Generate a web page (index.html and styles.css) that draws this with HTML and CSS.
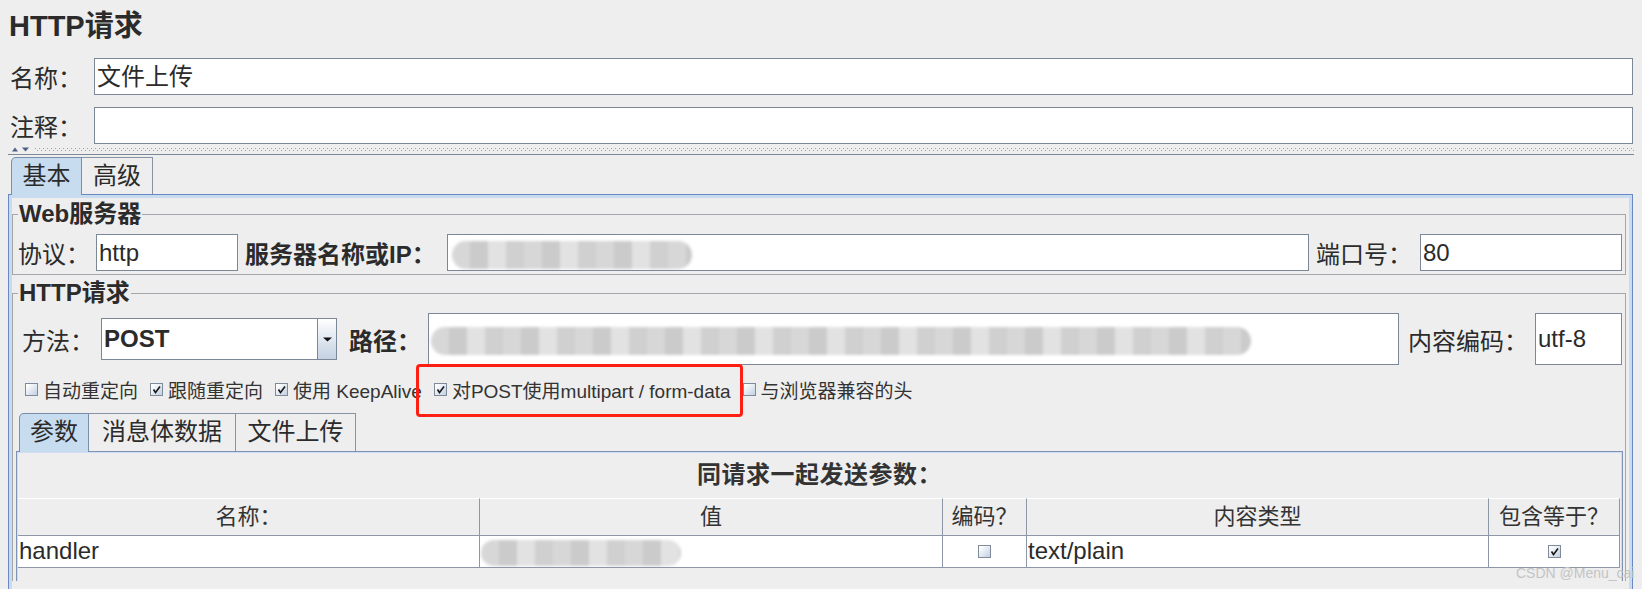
FILE: index.html
```html
<!DOCTYPE html>
<html lang="zh">
<head>
<meta charset="utf-8">
<title>HTTP请求</title>
<link rel="stylesheet" href="styles.css">
</head>
<body>
<div class="title">HTTP请求</div>
<div class="frow first"><span class="flabel">名称：</span><div class="field grow">文件上传</div></div>
<div class="frow second"><span class="flabel">注释：</span><div class="field grow"></div></div>
<div class="splitter">
  <svg class="arrows" width="20" height="5" viewBox="0 0 20 5"><polygon points="0,4.5 3,0.5 6,4.5" fill="#4d6185"/><polygon points="10,0.5 17,0.5 13.5,4.5" fill="#4d6185"/></svg>
  <div class="dots"></div>
</div>
<div class="tabs outer-tabs">
  <div class="tab sel w71">基本</div>
  <div class="tab w71">高级</div>
</div>
<div class="panel">
  <fieldset class="group">
    <legend>Web服务器</legend>
    <div class="row r-web">
      <span class="lbl w-proto">协议：</span>
      <div class="field f-proto">http</div>
      <span class="lbl bold w-server">服务器名称或IP：</span>
      <div class="field grow"><span class="blob blob-server"></span></div>
      <span class="lbl w-port">端口号：</span>
      <div class="field f-port">80</div>
    </div>
  </fieldset>
  <fieldset class="group g-http">
    <legend>HTTP请求</legend>
    <div class="row r-method">
      <span class="lbl w-method">方法：</span>
      <div class="combo">
        <div class="combo-text">POST</div>
        <div class="combo-btn"><svg width="9" height="5" viewBox="0 0 9 5"><polygon points="0,0.5 9,0.5 4.5,4.5" fill="#111"/></svg></div>
      </div>
      <span class="lbl bold w-path">路径：</span>
      <div class="field tall grow"><span class="blob blob-path"></span></div>
      <span class="lbl w-enc">内容编码：</span>
      <div class="field tall f-enc">utf-8</div>
    </div>
    <div class="row r-checks">
      <span class="cb"></span><span class="cbl">自动重定向</span>
      <span class="cb on"><svg width="11" height="11" viewBox="0 0 11 11"><path d="M2.5 5.5 L4.5 8.5 L9 2.5" stroke="#1a1a1a" stroke-width="1.6" fill="none"/></svg></span><span class="cbl">跟随重定向</span>
      <span class="cb on"><svg width="11" height="11" viewBox="0 0 11 11"><path d="M2.5 5.5 L4.5 8.5 L9 2.5" stroke="#1a1a1a" stroke-width="1.6" fill="none"/></svg></span><span class="cbl">使用 KeepAlive</span>
      <span class="cb on"><svg width="11" height="11" viewBox="0 0 11 11"><path d="M2.5 5.5 L4.5 8.5 L9 2.5" stroke="#1a1a1a" stroke-width="1.6" fill="none"/></svg></span><span class="cbl">对POST使用multipart / form-data</span>
      <span class="cb"></span><span class="cbl">与浏览器兼容的头</span>
    </div>
    <div class="tabs inner-tabs">
      <div class="tab sel w70">参数</div>
      <div class="tab w147">消息体数据</div>
      <div class="tab w120">文件上传</div>
    </div>
    <div class="inner-panel">
      <div class="tbl-title">同请求一起发送参数：</div>
      <div class="tbl">
        <div class="th">名称：</div>
        <div class="th">值</div>
        <div class="th">编码？</div>
        <div class="th">内容类型</div>
        <div class="th">包含等于？</div>
        <div class="td">handler</div>
        <div class="td"><span class="blob blob-value"></span></div>
        <div class="td center"><span class="cb"></span></div>
        <div class="td">text/plain</div>
        <div class="td center"><span class="cb on"><svg width="11" height="11" viewBox="0 0 11 11"><path d="M2.5 5.5 L4.5 8.5 L9 2.5" stroke="#1a1a1a" stroke-width="1.6" fill="none"/></svg></span></div>
      </div>
    </div>
  </fieldset>
</div>
<div class="redbox"></div>
<div class="watermark">CSDN @Menu_cai</div>
</body>
</html>
```
FILE: styles.css
```css
* { box-sizing: border-box; }
html, body { margin: 0; padding: 0; }
body {
  width: 1642px;
  height: 589px;
  overflow: hidden;
  position: relative;
  background: #eeeeee;
  color: #2b2b2b;
  font-family: "Liberation Sans", "Noto Sans CJK SC", sans-serif;
  font-size: 24px;
}
.title {
  font-size: 29px;
  font-weight: bold;
  line-height: 36px;
  padding: 8px 0 0 9px;
  height: 44px;
}
.frow {
  display: flex;
  align-items: center;
  height: 37px;
  margin: 0 9px 0 10px;
}
.frow.first { margin-top: 14px; }
.frow.second { margin-top: 12px; }
.flabel { width: 84px; flex: none; font-size: 24px; }
.field {
  height: 37px;
  background: #fff;
  border: 1px solid #7a8898;
  padding-left: 2px;
  font-size: 24px;
  line-height: 35px;
  white-space: nowrap;
  overflow: hidden;
  flex: none;
}
.field.grow, .grow { flex: 1; min-width: 0; }
.field.tall { height: 52px; line-height: 50px; }
.splitter {
  display: flex;
  align-items: center;
  height: 11px;
  margin: 0 8px;
  border-bottom: 1px solid #7a8898;
}
.arrows { margin-left: 4px; display: block; }
.dots {
  flex: 1;
  height: 3px;
  margin-left: 3px;
  background:
    linear-gradient(90deg, #9aa0a8 1px, transparent 1px) 0 0 / 4px 1px repeat-x,
    linear-gradient(90deg, #9aa0a8 1px, transparent 1px) 2px 2px / 4px 1px repeat-x;
}
.tabs { display: flex; align-items: flex-end; }
.outer-tabs { margin: 2px 0 0 11px; height: 37px; }
.tab {
  height: 37px;
  border: 1px solid #8794a3;
  border-bottom: none;
  border-top-left-radius: 5px;
  text-align: center;
  font-size: 24px;
  line-height: 35px;
  background: #eeeeee;
  flex: none;
}
.tab + .tab { border-left: none; border-top-left-radius: 0; }
.tab.sel {
  height: 38px;
  margin-bottom: -1px;
  background: #c8dcf0;
  position: relative;
  z-index: 2;
  border-color: #7b8da8;
}
.w70 { width: 70px; }
.w71 { width: 71px; }
.w147 { width: 147px; }
.w120 { width: 120px; }
.panel {
  margin: 0 9px 0 8px;
  border: 1px solid #6a88c2;
  border-bottom: none;
  padding: 3px 3px 0 3px;
  box-shadow: inset 3px 3px 0 #c9dbef, inset -3px 0 0 #c9dbef;
  height: 395px;
  overflow: hidden;
}
.group {
  margin: 2px 3px 0 0;
  padding: 0 2px 3px 3px;
  border: 1px solid #a3a6aa;
  min-width: 0;
}
.group.g-http { margin-top: 4px; padding-bottom: 0; border-bottom: none; }
.group legend {
  font-size: 24px;
  font-weight: bold;
  line-height: 28px;
  padding: 0 1px;
  margin-left: 2px;
}
.row { display: flex; align-items: center; }
.r-web { height: 37px; margin-top: 6px; padding: 0 1px 0 2px; }
.lbl { flex: none; font-size: 24px; white-space: nowrap; }
.bold { font-weight: bold; }
.w-proto { width: 78px; }
.f-proto { width: 142px; }
.w-server { width: 202px; margin-left: 7px; }
.w-port { width: 104px; margin-left: 7px; }
.f-port { width: 202px; }
.r-method { height: 52px; margin-top: 6px; padding: 0 1px 0 6px; }
.w-method { width: 79px; }
.combo {
  width: 236px;
  height: 42px;
  flex: none;
  display: flex;
  background: #fff;
  border: 1px solid #7a8898;
}
.combo-text {
  flex: 1;
  font-weight: bold;
  font-size: 24px;
  line-height: 40px;
  padding-left: 2px;
}
.combo-btn {
  width: 19px;
  border-left: 1px solid #7a8898;
  background: linear-gradient(#ffffff, #c3d1e1);
  display: flex;
  align-items: center;
  justify-content: center;
}
.combo-btn svg { display: block; }
.w-path { width: 79px; margin-left: 12px; }
.w-enc { width: 127px; margin-left: 9px; }
.f-enc { width: 87px; }
.r-checks { height: 48px; padding-left: 9px; }
.cb {
  width: 13px;
  height: 13px;
  flex: none;
  display: inline-flex;
  align-items: center;
  justify-content: center;
  border: 1px solid #7f8b98;
  background: linear-gradient(135deg, #ffffff 10%, #c2d0e1 100%);
}
.cb svg { display: block; }
.cbl {
  font-size: 19px;
  color: #333;
  margin-left: 5px;
  margin-right: 12px;
  white-space: nowrap;
}
.inner-tabs { margin-left: 3px; height: 38px; }
.inner-tabs .tab { height: 38px; line-height: 36px; }
.inner-tabs .tab.sel { height: 39px; }
.inner-panel {
  border: 1px solid #7d92b6;
  border-bottom: none;
  padding: 0 1px;
  box-shadow: inset 1px 1px 0 #d0ddee, inset -1px 0 0 #d0ddee;
  height: 130px;
}
.tbl-title {
  height: 46px;
  line-height: 46px;
  text-align: center;
  font-size: 24px;
  letter-spacing: 0.5px;
  font-weight: bold;
  color: #333;
}
.tbl {
  display: grid;
  grid-template-columns: 462px 463px 84px 462px 131px;
}
.th {
  height: 37px;
  border-top: 1px solid #ffffff;
  border-right: 1px solid #8c98a5;
  text-align: center;
  font-size: 22px;
  line-height: 35px;
  color: #333;
}
.td {
  height: 33px;
  background: #fff;
  border-top: 1px solid #8c98a5;
  border-bottom: 1px solid #8c98a5;
  border-right: 1px solid #8c98a5;
  font-size: 24px;
  line-height: 30px;
  padding-left: 1px;
  white-space: nowrap;
  overflow: hidden;
}
.td.center { display: flex; align-items: center; justify-content: center; padding: 0; }
.blob {
  display: inline-block;
  vertical-align: middle;
  border-radius: 14px;
  filter: blur(1.5px);
  background: repeating-linear-gradient(90deg, #d7d7d7 0 18px, #cbcbcb 18px 36px, #e2e2e2 36px 54px, #d0d0d0 54px 72px);
}
.blob-server { width: 240px; height: 28px; margin-left: 2px; }
.blob-path { width: 820px; height: 28px; margin-left: 0; }
.blob-value { width: 200px; height: 26px; margin-left: 0; }
.redbox {
  position: absolute;
  left: 416px;
  top: 364px;
  width: 327px;
  height: 53px;
  border: 3px solid #ff1e12;
  border-radius: 4px;
}
.watermark {
  position: absolute;
  left: 1516px;
  top: 565px;
  font-size: 14px;
  color: #c4c4c4;
  font-family: "Liberation Sans", sans-serif;
}
```
